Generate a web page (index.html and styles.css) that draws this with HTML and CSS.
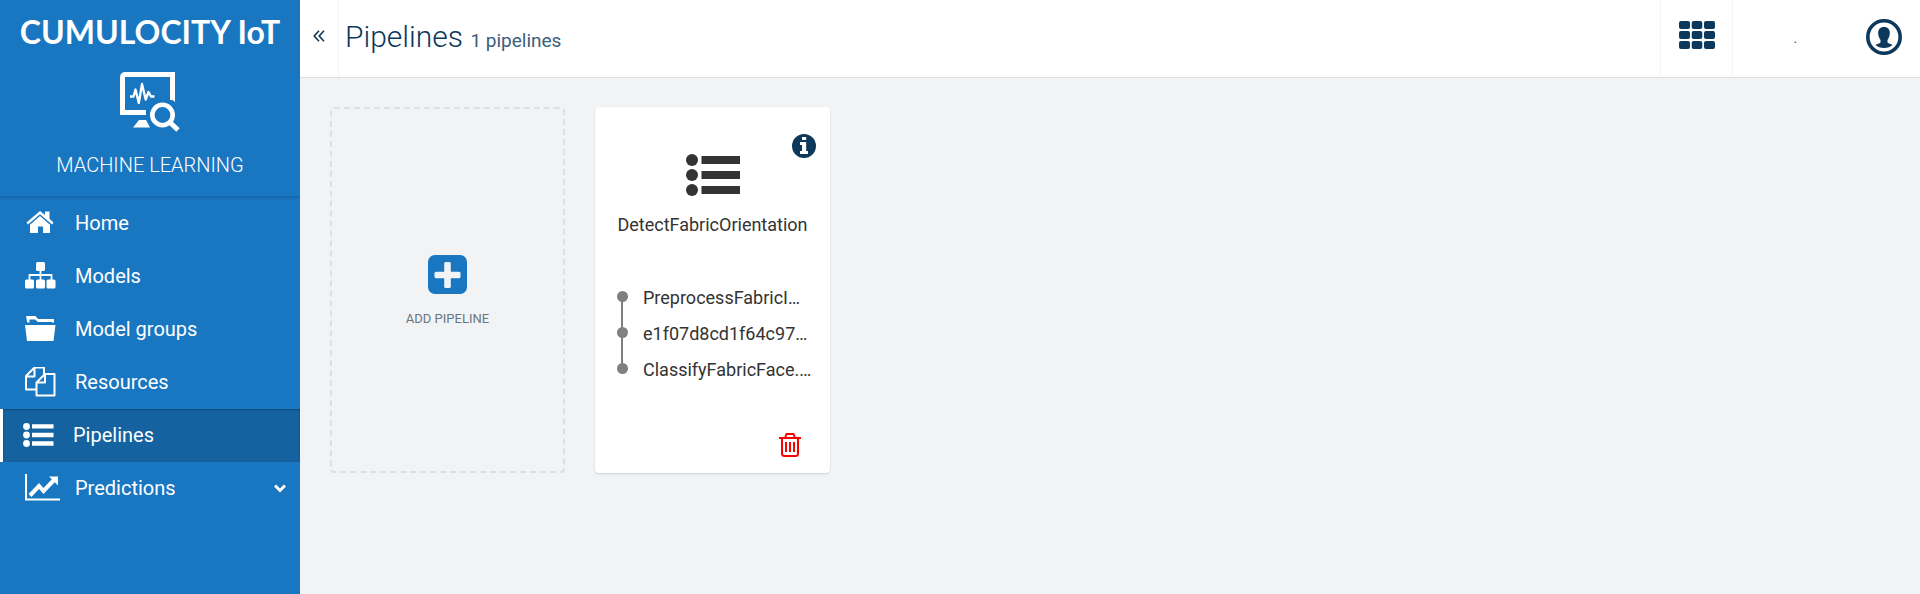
FILE: index.html
```html
<!DOCTYPE html>
<html lang="en">
<head>
<meta charset="utf-8">
<title>Pipelines - Machine Learning</title>
<link rel="stylesheet" href="styles.css">
</head>
<body>
<div class="app">
  <aside class="sidebar">
    <div class="brand">
      <div class="brand-name">CUMULOCITY IoT</div>
      <svg class="brand-icon" width="60" height="60" viewBox="0 0 60 60" fill="none" stroke="currentColor" aria-hidden="true">
        <path d="M26 40.500H2.500V5.500q0-3 3-3H52.500V28" stroke-width="5"/>
        <path d="M50 26l5 4v-4z" fill="currentColor" stroke="none"/>
        <path d="M10 24.500h3.500l2-7 3.300 13.500L22 12l3.700 15.500 2.800-7.500 2.500 4.500h3.500" stroke-width="2.300" stroke-linejoin="round"/>
        <path d="M19 48h7l4 7.500H13z" fill="currentColor" stroke="none"/>
        <circle cx="42.500" cy="43" r="10.200" stroke-width="4.600"/>
        <path d="M50 50.500l8 7.500" stroke-width="5"/>
      </svg>
      <div class="app-name">MACHINE LEARNING</div>
    </div>
    <nav class="nav">
      <a class="nav-item" href="#">
        <svg width="36" height="30" viewBox="0 0 36 30" fill="currentColor" aria-hidden="true"><path d="M1.500 14.500L15 3 20 7V3.500h4.500v7.300L28.500 14.500l-1.500 2L15 6.200 3 16.500z"/><path d="M15 8L25 16.700V25H18v-6.500h-5V25H5v-8.300z"/></svg>
        <span>Home</span>
      </a>
      <a class="nav-item" href="#">
        <svg width="36" height="30" viewBox="0 0 36 30" fill="currentColor" aria-hidden="true"><rect x="11" y="1" width="9" height="9" rx="1.500"/><rect x="0" y="18.500" width="9" height="9" rx="1.500"/><rect x="11" y="18.500" width="9" height="9" rx="1.500"/><rect x="21.500" y="18.500" width="9" height="9" rx="1.500"/><path d="M4.500 19v-5h22v5M15.500 9v10" fill="none" stroke="currentColor" stroke-width="1.800"/></svg>
        <span>Models</span>
      </a>
      <a class="nav-item" href="#">
        <svg width="36" height="30" viewBox="0 0 36 30" fill="currentColor" aria-hidden="true"><path d="M1 2h9.500l2.500 3h16v3.500h-2V8H13L10 5.500H4.500v3H2.200z"/><path d="M0 11h30.500l-2 16H2z"/></svg>
        <span>Model groups</span>
      </a>
      <a class="nav-item" href="#">
        <svg width="36" height="30" viewBox="0 0 36 30" fill="none" stroke="currentColor" stroke-width="2" stroke-linejoin="round" aria-hidden="true"><path d="M11 22.500H1V9L9.500 0.500H19v6.500M1 9.500h8.500V0.500M11.500 28.500V15.500L20 7h9.500v21.500zM11.500 15.500H20V7"/></svg>
        <span>Resources</span>
      </a>
      <a class="nav-item active" href="#" aria-current="page">
        <svg width="36" height="30" viewBox="0 0 36 30" fill="currentColor" aria-hidden="true"><circle cx="3.500" cy="6.500" r="3.400"/><circle cx="3.500" cy="15" r="3.400"/><circle cx="3.500" cy="23.500" r="3.400"/><path d="M9 4.200h21.500v4.400H9zM9 12.800h21.500v4.400H9zM9 21.300h21.500v4.400H9z"/></svg>
        <span>Pipelines</span>
      </a>
      <a class="nav-item" href="#">
        <svg width="36" height="30" viewBox="0 0 36 30" aria-hidden="true"><path d="M1 1v25.500h34" fill="none" stroke="currentColor" stroke-width="2"/><path d="M5 22.500l9-9.500 4.500 5L29 7" fill="none" stroke="currentColor" stroke-width="4"/><path d="M24 3.500h9v9z" fill="currentColor"/></svg>
        <span>Predictions</span>
        <svg class="chevron" width="12" height="12" viewBox="0 0 12 12" fill="none" stroke="currentColor" stroke-width="3" aria-hidden="true"><path d="M1 3.500l5 5 5-5"/></svg>
      </a>
    </nav>
  </aside>
  <div class="page">
    <header class="header">
      <button class="collapse" type="button" aria-label="Collapse navigation">
        <svg width="12" height="12" viewBox="0 0 12 12" fill="none" stroke="currentColor" stroke-width="1.600" aria-hidden="true"><path d="M6 .8L1.200 6 6 11.200M11 .8L6.200 6 11 11.200"/></svg>
      </button>
      <h1 class="title">Pipelines <small>1 pipelines</small></h1>
      <button class="switcher" type="button" aria-label="Applications">
        <svg width="36" height="28" viewBox="0 0 36 28" fill="currentColor" aria-hidden="true"><rect width="11" height="8" rx="2"/><rect x="12.700" width="10.600" height="8" rx="2"/><rect x="25" width="11" height="8" rx="2"/><rect y="10" width="11" height="8" rx="2"/><rect x="12.700" y="10" width="10.600" height="8" rx="2"/><rect x="25" y="10" width="11" height="8" rx="2"/><rect y="20" width="11" height="8" rx="2"/><rect x="12.700" y="20" width="10.600" height="8" rx="2"/><rect x="25" y="20" width="11" height="8" rx="2"/></svg>
      </button>
      <button class="user" type="button" aria-label="User">
        <span class="user-name">.</span>
        <svg width="36" height="36" viewBox="0 0 36 36" aria-hidden="true"><circle cx="18" cy="18" r="16.200" fill="none" stroke="currentColor" stroke-width="3.600"/><path d="M18 8c4 0 6 2.500 5.800 6.500-.1 3-1.300 5-2.300 6.500v2.500c1 1.300 3.500 1.300 5 2.300C24.500 28 21.500 29 18 29s-6.500-1-8.500-3.200c1.500-1 4-1 5-2.300V21c-1-1.500-2.200-3.500-2.300-6.500C12 10.500 14 8 18 8z" fill="currentColor"/></svg>
      </button>
    </header>
    <main class="cards">
      <button class="card-add" type="button">
        <svg width="39" height="39" viewBox="0 0 39 39" aria-hidden="true"><rect width="39" height="39" rx="7" fill="#1976c1"/><rect x="16.200" y="7" width="6.600" height="26" rx="1.500" fill="#f1f3f5"/><rect x="6.500" y="16.700" width="26" height="6.600" rx="1.500" fill="#f1f3f5"/></svg>
        <span>ADD PIPELINE</span>
      </button>
      <article class="card">
        <button class="info" type="button" aria-label="Pipeline information">
          <svg width="24" height="24" viewBox="0 0 24 24" aria-hidden="true"><circle cx="12" cy="12" r="12" fill="currentColor"/><path d="M10 3h4.200v3H10zM8 8h6.200v9H16v3H8v-3h2v-6H8z" fill="#fff"/></svg>
        </button>
        <svg class="card-icon" width="54" height="42" viewBox="0 0 54 42" fill="currentColor" aria-hidden="true"><circle cx="6" cy="6" r="6"/><circle cx="6" cy="21" r="6"/><circle cx="6" cy="36" r="6"/><path d="M15.500 2H54v8H15.500zM15.500 17H54v8H15.500zM15.500 32H54v8H15.500z"/></svg>
        <h2 class="card-title">DetectFabricOrientation</h2>
        <ol class="steps">
          <li>PreprocessFabricI…</li>
          <li>e1f07d8cd1f64c97…</li>
          <li>ClassifyFabricFace.…</li>
        </ol>
        <button class="delete" type="button" aria-label="Delete pipeline">
          <svg width="22" height="24" viewBox="0 0 22 24" fill="none" stroke="currentColor" stroke-width="2" aria-hidden="true"><path d="M0 5h22M6 5l1.500-4h7L16 5M3 5v15.500q0 2.500 2.500 2.500h11q2.500 0 2.500-2.500V5M7 9v10M11 9v10M15 9v10"/></svg>
        </button>
      </article>
    </main>
  </div>
</div>
</body>
</html>
```
FILE: styles.css
```css
* {
  box-sizing: border-box;
}

body {
  margin: 0;
  background: #f1f3f5;
  color: #333;
  font-family: Roboto, "Liberation Sans", sans-serif;
  font-size: 18px;
}

button {
  padding: 0;
  border: 0;
  background: none;
  color: inherit;
  font: inherit;
  cursor: pointer;
}

svg {
  display: block;
  flex: none;
}

.app {
  display: flex;
  min-height: 100vh;
}

/* Sidebar */

.sidebar {
  flex: none;
  width: 300px;
  background: #1976c1;
  color: #fff;
}

.brand {
  display: flex;
  flex-direction: column;
  align-items: center;
  height: 196px;
  padding-top: 12px;
  box-shadow: 0 1px 4px rgba(0, 0, 0, 0.2);
  clip-path: inset(0 0 -6px 0);
}

.brand-name {
  font-family: Lato, sans-serif;
  font-size: 32px;
  font-weight: 700;
  line-height: 40px;
  white-space: nowrap;
}

.brand-icon {
  margin-top: 20px;
}

.app-name {
  margin-top: 20px;
  font-size: 20px;
  font-weight: 300;
  line-height: 26px;
}

.nav {
  padding-top: 1px;
}

.nav-item {
  display: flex;
  align-items: center;
  gap: 14px;
  height: 53px;
  padding: 0 14px 2px 25px;
  color: #fff;
  font-size: 20px;
  text-decoration: none;
}

.nav-item.active {
  padding-left: 20px;
  border-left: 3px solid #fff;
  background: #1562a1;
  box-shadow: inset 0 1px 2px rgba(0, 0, 0, 0.25);
}

.chevron {
  margin-left: auto;
}

/* Header */

.page {
  flex: 1;
  min-width: 0;
}

.header {
  display: flex;
  height: 78px;
  border-bottom: 1px solid #dcdfe1;
  background: #fff;
  color: #0b385b;
}

.collapse {
  display: flex;
  align-items: center;
  justify-content: center;
  width: 39px;
  padding-bottom: 6px;
  border-right: 1px solid #f1f3f4;
}

.title {
  flex: 1;
  margin: 0;
  padding-left: 6px;
  font-size: 30px;
  font-weight: 300;
  line-height: 74px;
}

.title small {
  color: #3c607c;
  font-size: 19px;
  font-weight: 400;
}

.switcher {
  display: flex;
  justify-content: center;
  width: 73px;
  padding-top: 21px;
  border: solid #f1f3f4;
  border-width: 0 1px;
}

.user {
  display: flex;
  justify-content: flex-end;
  gap: 69px;
  width: 187px;
  padding: 19px 18px 0 0;
}

.user-name {
  font-size: 12px;
  line-height: 40px;
}

/* Pipeline cards */

.cards {
  display: flex;
  flex-wrap: wrap;
  gap: 30px;
  padding: 29px 30px;
}

.card-add,
.card {
  width: 235px;
  min-height: 366px;
  border-radius: 4px;
}

.card-add {
  display: flex;
  flex-direction: column;
  align-items: center;
  justify-content: center;
  gap: 15px;
  padding-top: 3px;
  border: 2px dashed #dddfe1;
  color: #687782;
  font-size: 13px;
  line-height: 20px;
}

.card {
  position: relative;
  display: flex;
  flex-direction: column;
  padding: 47px 20px 16px;
  background: #fff;
  box-shadow: 0 1px 2px rgba(0, 0, 0, 0.15);
}

.info {
  position: absolute;
  top: 27px;
  right: 14px;
  color: #0b385b;
}

.card-icon {
  align-self: center;
}

.card-title {
  margin: 16px 0 0;
  font-size: 18px;
  font-weight: 400;
  line-height: 26px;
  text-align: center;
}

.steps {
  margin: 42px 0 0;
  padding: 0;
  list-style: none;
}

.steps li {
  position: relative;
  padding-left: 28px;
  line-height: 36px;
  white-space: nowrap;
}

.steps li::before {
  content: "";
  position: absolute;
  top: 11px;
  left: 2px;
  width: 11px;
  height: 11px;
  border-radius: 50%;
  background: #808080;
}

.steps li + li::after {
  content: "";
  position: absolute;
  top: -18px;
  left: 6px;
  width: 2px;
  height: 36px;
  background: #808080;
}

.delete {
  align-self: flex-end;
  margin: auto 9px 0 0;
  color: #f00;
}
```
